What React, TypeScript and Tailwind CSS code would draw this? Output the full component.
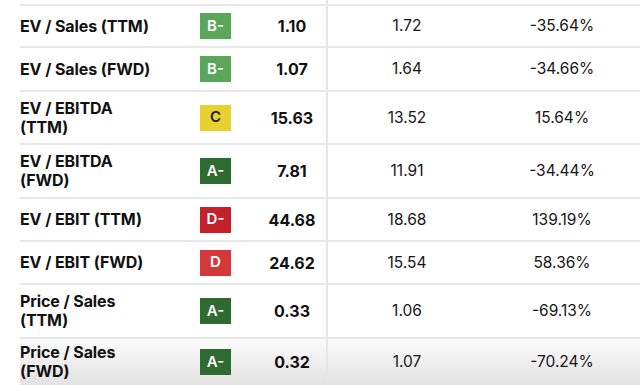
type Row = {
  label: string[];
  grade: string;
  value: string;
  sector: string;
  diff: string;
  h: string;
};

const gradeStyles: Record<string, string> = {
  'B-': 'bg-[#5aa65b] text-white',
  C: 'bg-[#e6d12f] text-[#1a1a1a]',
  'A-': 'bg-[#2f6a31] text-white',
  'D-': 'bg-[#c4212b] text-white',
  D: 'bg-[#d5383b] text-white',
};

const rows: Row[] = [
  { label: ['EV / Sales (TTM)'], grade: 'B-', value: '1.10', sector: '1.72', diff: '-35.64%', h: 'h-[42px]' },
  { label: ['EV / Sales (FWD)'], grade: 'B-', value: '1.07', sector: '1.64', diff: '-34.66%', h: 'h-[44px]' },
  { label: ['EV / EBITDA', '(TTM)'], grade: 'C', value: '15.63', sector: '13.52', diff: '15.64%', h: 'h-[53px]' },
  { label: ['EV / EBITDA', '(FWD)'], grade: 'A-', value: '7.81', sector: '11.91', diff: '-34.44%', h: 'h-[54px]' },
  { label: ['EV / EBIT (TTM)'], grade: 'D-', value: '44.68', sector: '18.68', diff: '139.19%', h: 'h-[43px]' },
  { label: ['EV / EBIT (FWD)'], grade: 'D', value: '24.62', sector: '15.54', diff: '58.36%', h: 'h-[43px]' },
  { label: ['Price / Sales', '(TTM)'], grade: 'A-', value: '0.33', sector: '1.06', diff: '-69.13%', h: 'h-[54px]' },
  { label: ['Price / Sales', '(FWD)'], grade: 'A-', value: '0.32', sector: '1.07', diff: '-70.24%', h: 'h-[48px]' },
];

export default function App() {
  return (
    <main
      className="w-[640px] h-[385px] overflow-hidden bg-white text-[#111]"
      style={{ fontFamily: 'Inter, "Liberation Sans", Arial, sans-serif' }}
    >
      {/* cut-off row above */}
      <div className="h-[4px] grid grid-cols-[326px_2px_1fr]">
        <div />
        <div className="bg-[#e6e6e6]" />
        <div />
      </div>

      {rows.map((r, i) => (
        <div
          key={i}
          className={`${r.h} flex border-t-2 border-[#e8e8e8] ml-5 ${
            i === rows.length - 1 ? 'bg-gradient-to-b from-[#fbfbfb] to-[#e2e2e2]' : ''
          }`}
        >
          <div className="w-[180px] flex flex-col justify-center text-[16px] leading-[19px] font-bold tracking-[-0.1px]">
            {r.label.map((l) => (
              <span key={l}>{l}</span>
            ))}
          </div>
          <div className="w-[38px] flex items-center">
            <span
              className={`w-[31px] h-[26px] flex items-center justify-center text-[15px] font-semibold ${gradeStyles[r.grade]}`}
            >
              {r.grade}
            </span>
          </div>
          <div className="w-[88px] flex items-center justify-center pl-[20px] text-[16px] font-bold">
            {r.value}
          </div>
          <div className="w-[160px] border-l-2 border-[#e6e6e6] flex items-center justify-center text-[15.5px] text-[#161616]">
            {r.sector}
          </div>
          <div className="flex-1 flex items-center justify-center text-[15.5px] text-[#161616] pr-[2px]">
            {r.diff}
          </div>
        </div>
      ))}
    </main>
  );
}
